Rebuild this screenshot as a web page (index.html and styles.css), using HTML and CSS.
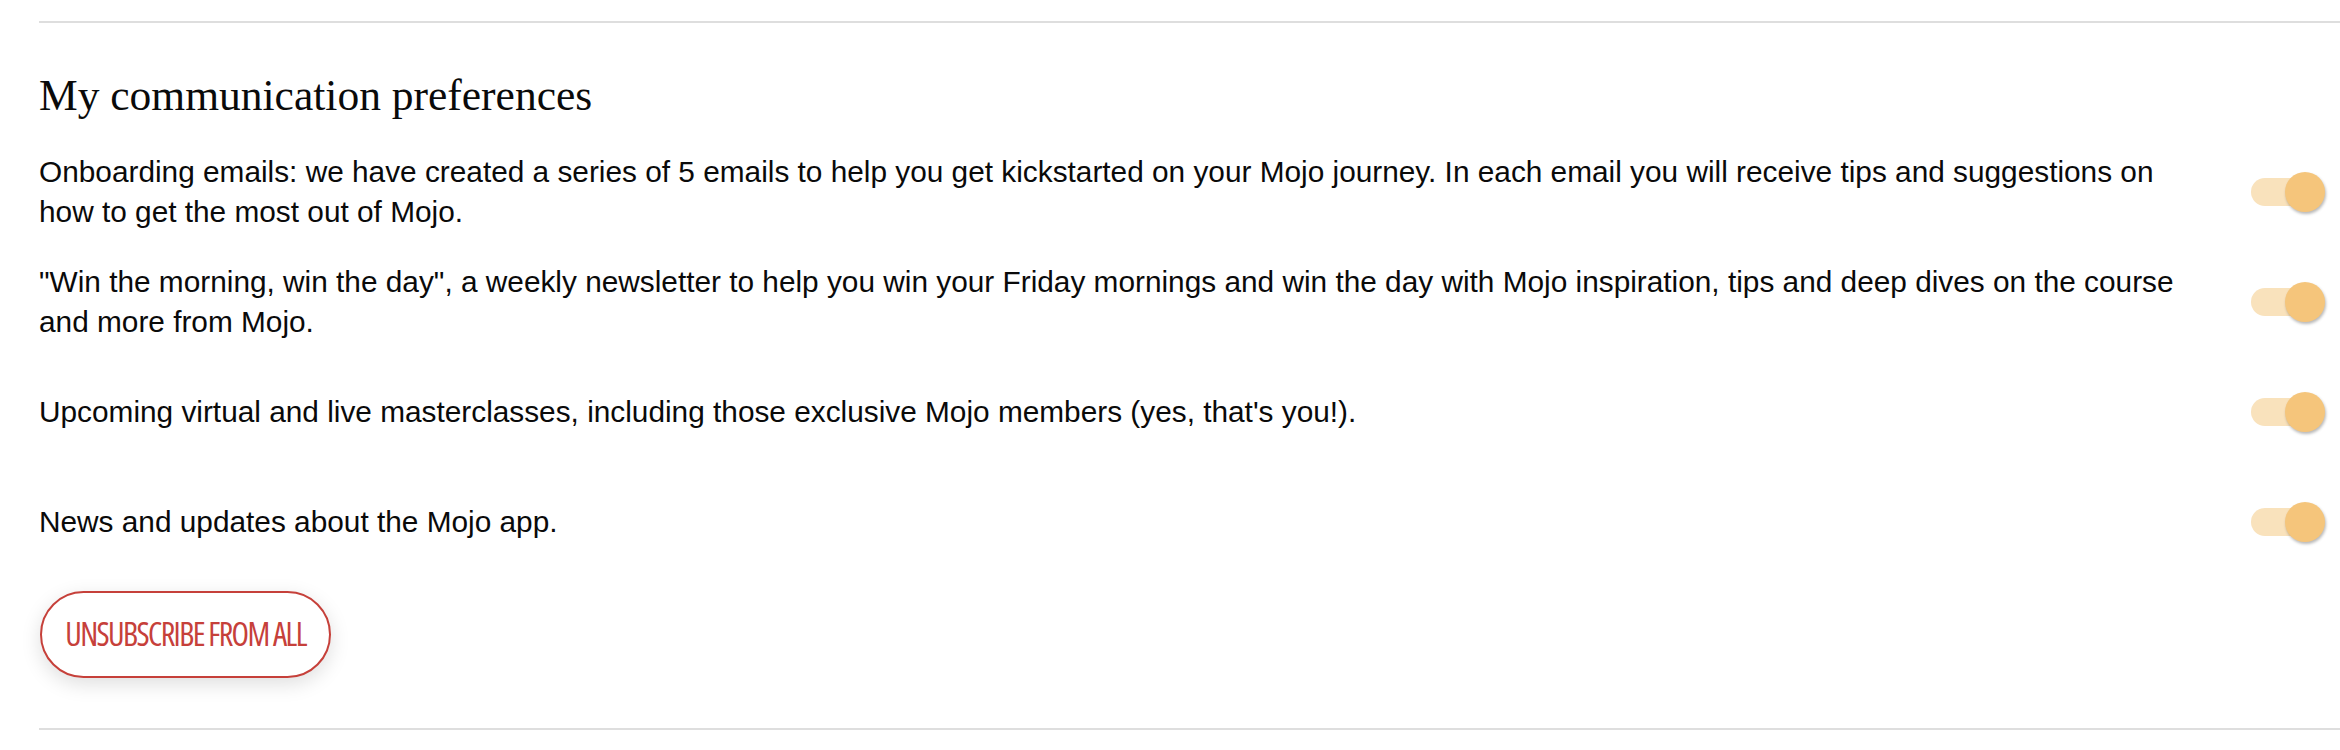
FILE: index.html
```html
<!DOCTYPE html>
<html lang="en">
<head>
<meta charset="utf-8">
<title>My communication preferences</title>
<link rel="stylesheet" href="styles.css">
</head>
<body>
<section class="prefs">
  <hr class="rule">
  <h2 class="prefs-title">My communication preferences</h2>
  <ul class="pref-list">
    <li class="pref-row">
      <p class="pref-text">Onboarding emails: we have created a series of 5 emails to help you get kickstarted on your Mojo journey. In each email you will receive tips and suggestions on how to get the most out of Mojo.</p>
      <span class="switch"><span class="switch-track"></span><span class="switch-knob"></span></span>
    </li>
    <li class="pref-row">
      <p class="pref-text">"Win the morning, win the day", a weekly newsletter to help you win your Friday mornings and win the day with Mojo inspiration, tips and deep dives on the course and more from Mojo.</p>
      <span class="switch"><span class="switch-track"></span><span class="switch-knob"></span></span>
    </li>
    <li class="pref-row">
      <p class="pref-text">Upcoming virtual and live masterclasses, including those exclusive Mojo members (yes, that's you!).</p>
      <span class="switch"><span class="switch-track"></span><span class="switch-knob"></span></span>
    </li>
    <li class="pref-row">
      <p class="pref-text">News and updates about the Mojo app.</p>
      <span class="switch"><span class="switch-track"></span><span class="switch-knob"></span></span>
    </li>
  </ul>
  <button class="unsub-btn" type="button">UNSUBSCRIBE FROM ALL</button>
  <hr class="rule rule-bottom">
</section>
</body>
</html>
```
FILE: styles.css
```css
html, body {
  margin: 0;
  padding: 0;
  background: #ffffff;
}

.prefs {
  padding: 21px 0 0 39px;
  color: #0a0a0a;
  font-family: "Liberation Sans", Arial, sans-serif;
}

.rule {
  margin: 0;
  border: 0;
  border-top: 2px solid #dedede;
  height: 0;
}

.prefs-title {
  margin: 47px 0 0 0;
  font-family: "Liberation Serif", "Times New Roman", serif;
  font-weight: 400;
  font-size: 43.5px;
  line-height: 50px;
  color: #0a0a0a;
}

.pref-list {
  list-style: none;
  margin: 18px 0 0 0;
  padding: 0;
  display: flex;
  flex-direction: column;
  gap: 2px;
}

.pref-row {
  display: flex;
  align-items: center;
  min-height: 108px;
  padding-right: 15px;
}

.pref-text {
  flex: 1 1 auto;
  margin: 0 47px 0 0;
  font-size: 29.8px;
  line-height: 40px;
}

.switch {
  position: relative;
  flex: 0 0 74px;
  width: 74px;
  height: 40px;
}

.switch-track {
  position: absolute;
  left: 0;
  top: 6px;
  width: 70px;
  height: 28px;
  border-radius: 14px;
  background: #f9e2bc;
}

.switch-knob {
  position: absolute;
  left: 34px;
  top: 0;
  width: 40px;
  height: 40px;
  border-radius: 50%;
  background: #f5c57b;
  box-shadow: 1px 2px 3px rgba(0, 0, 0, 0.28);
}

.unsub-btn {
  display: block;
  margin: 15px 0 0 1px;
  width: 291px;
  height: 87px;
  padding: 0 0 2px 0;
  border: 2px solid #c6403a;
  border-radius: 44px;
  background: #ffffff;
  color: #c6403a;
  font-family: "Open Sans", sans-serif;
  font-stretch: 75%;
  font-weight: 500;
  font-size: 32px;
  letter-spacing: -1.6px;
  box-shadow: 0 6px 20px rgba(0, 0, 0, 0.13);
  cursor: pointer;
}

.rule-bottom {
  margin-top: 50px;
}
```
